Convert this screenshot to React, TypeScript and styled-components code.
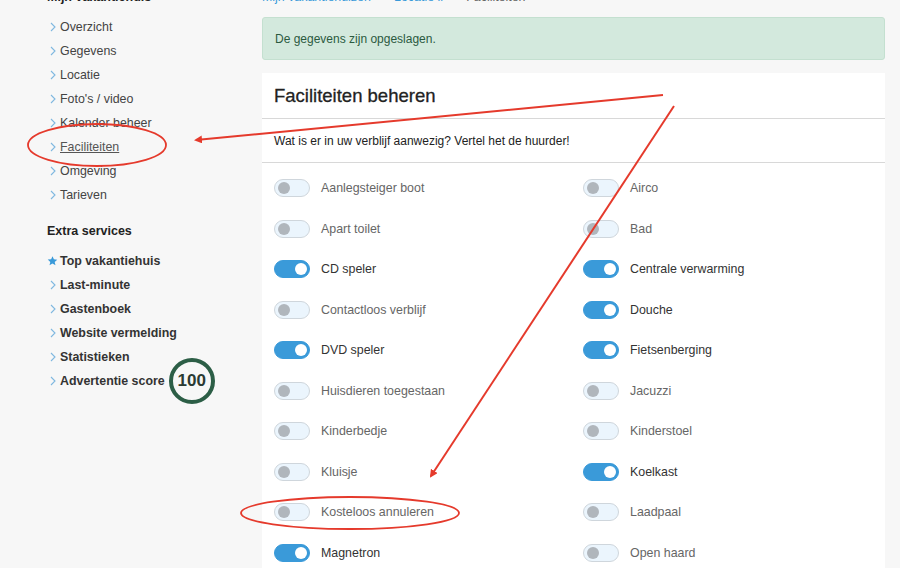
import React from "react";
import styled, { createGlobalStyle } from "styled-components";

const GlobalStyle = createGlobalStyle`
  * {
    box-sizing: border-box;
    margin: 0;
    padding: 0;
  }
  body {
    font-family: "Liberation Sans", Arial, sans-serif;
    background: #f7f7f7;
    color: #333;
    overflow: hidden;
  }
`;

const menu = [
  "Overzicht",
  "Gegevens",
  "Locatie",
  "Foto's / video",
  "Kalender beheer",
  "Faciliteiten",
  "Omgeving",
  "Tarieven",
];

const extras = ["Last-minute", "Gastenboek", "Website vermelding", "Statistieken"];

const facilities: [string, boolean][] = [
  ["Aanlegsteiger boot", false],
  ["Airco", false],
  ["Apart toilet", false],
  ["Bad", false],
  ["CD speler", true],
  ["Centrale verwarming", true],
  ["Contactloos verblijf", false],
  ["Douche", true],
  ["DVD speler", true],
  ["Fietsenberging", true],
  ["Huisdieren toegestaan", false],
  ["Jacuzzi", false],
  ["Kinderbedje", false],
  ["Kinderstoel", false],
  ["Kluisje", false],
  ["Koelkast", true],
  ["Kosteloos annuleren", false],
  ["Laadpaal", false],
  ["Magnetron", true],
  ["Open haard", false],
];

const Chevron = () => (
  <svg width="6" height="10" viewBox="0 0 6 10">
    <path d="M1 1l4 4-4 4" fill="none" stroke="#7fb8e0" strokeWidth="1.1" />
  </svg>
);

const Star = () => (
  <svg width="12" height="12" viewBox="0 0 24 24">
    <path
      d="M12 1.5l3 6.8 7.4.7-5.6 5 1.7 7.3L12 17.4l-6.5 3.9 1.7-7.3-5.6-5 7.4-.7z"
      fill="#3a9ad9"
    />
  </svg>
);

const App = () => {
  return (
    <>
      <GlobalStyle />
      <Page>
        <Sidebar>
          <SideTitle>Mijn vakantiehuis</SideTitle>
          <SideList>
            {menu.map((m) => (
              <SideItem key={m}>
                <IconSlot>
                  <Chevron />
                </IconSlot>
                <SideLink $active={m === "Faciliteiten"}>{m}</SideLink>
              </SideItem>
            ))}
          </SideList>
          <SideTitle $gap>Extra services</SideTitle>
          <SideList>
            <SideItem $bold>
              <IconSlot>
                <Star />
              </IconSlot>
              <SideLink>Top vakantiehuis</SideLink>
            </SideItem>
            {extras.map((m) => (
              <SideItem key={m} $bold>
                <IconSlot>
                  <Chevron />
                </IconSlot>
                <SideLink>{m}</SideLink>
              </SideItem>
            ))}
            <SideItem $bold>
              <IconSlot>
                <Chevron />
              </IconSlot>
              <SideLink>Advertentie score</SideLink>
              <Score>100</Score>
            </SideItem>
          </SideList>
        </Sidebar>
        <Main>
          <Breadcrumb>
            <Crumb>Mijn vakantiehuizen</Crumb>
            <Sep>&gt;</Sep>
            <Crumb>Locatie ii</Crumb>
            <Sep>&gt;</Sep>
            <Current>Faciliteiten</Current>
          </Breadcrumb>
          <Alert>De gegevens zijn opgeslagen.</Alert>
          <Card>
            <CardHeader>Faciliteiten beheren</CardHeader>
            <CardIntro>Wat is er in uw verblijf aanwezig? Vertel het de huurder!</CardIntro>
            <Grid>
              {facilities.map(([name, on]) => (
                <Facility key={name}>
                  <Toggle $on={on}>
                    <Knob $on={on} />
                  </Toggle>
                  <Label $on={on}>{name}</Label>
                </Facility>
              ))}
            </Grid>
          </Card>
        </Main>
      </Page>
      <Annotations width="900" height="568" viewBox="0 0 900 568">
        <defs>
          <marker id="head" markerWidth="8" markerHeight="8" refX="6" refY="4" orient="auto" markerUnits="userSpaceOnUse">
            <path d="M0 0L8 4L0 8z" fill="#e53a2c" />
          </marker>
        </defs>
        <ellipse cx="97" cy="145" rx="69" ry="21" fill="none" stroke="#e53a2c" strokeWidth="1.8" />
        <ellipse cx="350" cy="513" rx="109" ry="16" fill="none" stroke="#e53a2c" strokeWidth="1.8" />
        <line x1="663" y1="95" x2="196" y2="140" stroke="#e53a2c" strokeWidth="2" markerEnd="url(#head)" />
        <line x1="674" y1="106" x2="431" y2="476" stroke="#e53a2c" strokeWidth="2" markerEnd="url(#head)" />
      </Annotations>
    </>
  );
};

export default App;

const Page = styled.div`
  display: flex;
  margin-top: -15px;
  padding-left: 47px;
  padding-right: 15px;
`;

const Sidebar = styled.aside`
  width: 215px;
  flex-shrink: 0;
`;

const SideTitle = styled.h3<{ $gap?: boolean }>`
  font-size: 12.5px;
  font-weight: 700;
  line-height: 24px;
  color: #222;
  margin-top: ${(p) => (p.$gap ? "12px" : "0")};
  margin-bottom: 6px;
`;

const SideList = styled.ul`
  list-style: none;
`;

const SideItem = styled.li<{ $bold?: boolean }>`
  display: flex;
  align-items: center;
  height: 24px;
  gap: 2px;
  font-size: 12.4px;
  font-weight: ${(p) => (p.$bold ? 700 : 400)};
  color: ${(p) => (p.$bold ? "#333" : "#444")};
`;

const IconSlot = styled.span`
  display: flex;
  align-items: center;
  justify-content: center;
  width: 11px;
`;

const SideLink = styled.span<{ $active?: boolean }>`
  text-decoration: ${(p) => (p.$active ? "underline" : "none")};
  color: ${(p) => (p.$active ? "#555" : "inherit")};
`;

const Score = styled.span`
  display: flex;
  align-items: center;
  justify-content: center;
  width: 46px;
  height: 46px;
  margin: -11px 0 -11px 2px;
  border: 4px solid #2c5e46;
  border-radius: 50%;
  font-size: 17px;
  font-weight: 700;
  color: #2a3a32;
  background: #f7f7f7;
`;

const Main = styled.main`
  flex: 1;
  min-width: 0;
`;

const Breadcrumb = styled.div`
  display: flex;
  gap: 8px;
  height: 24px;
  align-items: center;
  font-size: 12.4px;
  margin-bottom: 8px;
`;

const Crumb = styled.a`
  color: #3a9ad9;
`;

const Sep = styled.span`
  color: #999;
`;

const Current = styled.span`
  color: #666;
`;

const Alert = styled.div`
  height: 43px;
  display: flex;
  align-items: center;
  padding: 0 12px;
  background: #d3e9dd;
  border: 1px solid #c4e0d0;
  border-radius: 3px;
  color: #2b5a3f;
  font-size: 12px;
  margin-bottom: 13px;
`;

const Card = styled.section`
  background: #fff;
`;

const CardHeader = styled.h2`
  height: 46px;
  display: flex;
  align-items: center;
  padding: 0 12px;
  font-size: 18.5px;
  font-weight: 400;
  color: #222;
  border-bottom: 1px solid #d8d8d8;
  -webkit-text-stroke: 0.3px #222;
`;

const CardIntro = styled.p`
  height: 44px;
  display: flex;
  align-items: center;
  padding: 0 12px;
  font-size: 12px;
  color: #222;
  border-bottom: 1px solid #d8d8d8;
`;

const Grid = styled.div`
  display: grid;
  grid-template-columns: 290px 1fr;
  column-gap: 19px;
  grid-auto-rows: 40.5px;
  padding: 5px 12px 0;
`;

const Facility = styled.div`
  display: flex;
  align-items: center;
  gap: 11px;
`;

const Toggle = styled.span<{ $on: boolean }>`
  position: relative;
  width: 36px;
  height: 18px;
  border-radius: 9px;
  flex-shrink: 0;
  background: ${(p) => (p.$on ? "#3a9ad9" : "#ebf5fd")};
  border: 1px solid ${(p) => (p.$on ? "#3a9ad9" : "#cfd6dc")};
`;

const Knob = styled.span<{ $on: boolean }>`
  position: absolute;
  top: 2px;
  left: ${(p) => (p.$on ? "20px" : "3px")};
  width: 12px;
  height: 12px;
  border-radius: 50%;
  background: ${(p) => (p.$on ? "#fff" : "#b0b6bc")};
`;

const Label = styled.span<{ $on: boolean }>`
  font-size: 12.4px;
  color: ${(p) => (p.$on ? "#333" : "#666")};
`;

const Annotations = styled.svg`
  position: absolute;
  top: 0;
  left: 0;
  pointer-events: none;
`;
